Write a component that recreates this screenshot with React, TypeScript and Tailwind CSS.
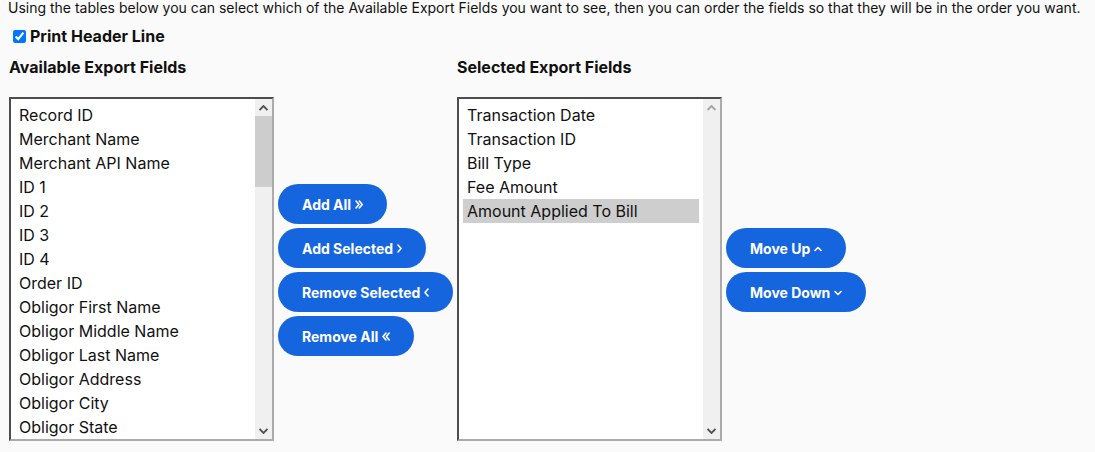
import React from "react";

const left = [
  "Record ID",
  "Merchant Name",
  "Merchant API Name",
  "ID 1",
  "ID 2",
  "ID 3",
  "ID 4",
  "Order ID",
  "Obligor First Name",
  "Obligor Middle Name",
  "Obligor Last Name",
  "Obligor Address",
  "Obligor City",
  "Obligor State",
];

const right = ["Transaction Date", "Transaction ID", "Bill Type", "Fee Amount", "Amount Applied To Bill"];

function Arrow({ up, color }: { up?: boolean; color: string }) {
  return (
    <svg width="9" height="6" viewBox="0 0 9 6">
      {up ? (
        <path d="M0.5 5 L4.5 1 L8.5 5" fill="none" stroke={color} strokeWidth="1.8" />
      ) : (
        <path d="M0.5 1 L4.5 5 L8.5 1" fill="none" stroke={color} strokeWidth="1.8" />
      )}
    </svg>
  );
}

type IconKind = "rr" | "r" | "l" | "ll" | "u" | "d";

function Icon({ kind }: { kind: IconKind }) {
  const common = { fill: "none", stroke: "white", strokeWidth: 1.6, strokeLinecap: "round" as const, strokeLinejoin: "round" as const };
  if (kind === "r")
    return (
      <svg width="5" height="9" viewBox="0 0 5 9">
        <path d="M1 1 L4 4.5 L1 8" {...common} />
      </svg>
    );
  if (kind === "l")
    return (
      <svg width="5" height="9" viewBox="0 0 5 9">
        <path d="M4 1 L1 4.5 L4 8" {...common} />
      </svg>
    );
  if (kind === "rr")
    return (
      <svg width="8" height="9" viewBox="0 0 8 9">
        <path d="M1 1 L4 4.5 L1 8 M4.3 1 L7.2 4.5 L4.3 8" {...common} />
      </svg>
    );
  if (kind === "ll")
    return (
      <svg width="8" height="9" viewBox="0 0 8 9">
        <path d="M4 1 L1 4.5 L4 8 M7.2 1 L4.3 4.5 L7.2 8" {...common} />
      </svg>
    );
  if (kind === "u")
    return (
      <svg width="8" height="6" viewBox="0 0 8 6" className="mt-[2px]">
        <path d="M1 4.5 L4 1.5 L7 4.5" {...common} />
      </svg>
    );
  return (
    <svg width="8" height="6" viewBox="0 0 8 6" className="mt-[1px]">
      <path d="M1 1.5 L4 4.5 L7 1.5" {...common} />
    </svg>
  );
}

function ListBox({ items, selected, thumb }: { items: string[]; selected?: number; thumb?: boolean }) {
  return (
    <div className="flex h-[344px] w-[265px] shrink-0 border-t-2 border-l-2 border-r-2 border-b-2 border-t-[#4d4d4d] border-l-[#4d4d4d] border-r-[#ababab] border-b-[#ababab] bg-white">
      <div className="flex-1 overflow-hidden px-1 pt-1">
        {items.map((t, i) => (
          <div
            key={t}
            className={`h-6 px-1 text-[16px] leading-6 whitespace-nowrap text-[#111] ${i === selected ? "bg-[#cecece]" : ""}`}
          >
            {t}
          </div>
        ))}
      </div>
      <div className="flex w-[17px] shrink-0 flex-col bg-[#f0f0f0]">
        <div className="flex h-[17px] items-center justify-center">
          <Arrow up color={thumb ? "#505050" : "#a3a3a3"} />
        </div>
        <div className="flex-1">
          {thumb && <div className="h-[71px] bg-[#cdcdcd]" />}
        </div>
        <div className="flex h-[17px] items-center justify-center">
          <Arrow color="#505050" />
        </div>
      </div>
    </div>
  );
}

function Btn({ label, icon }: { label: string; icon: IconKind }) {
  return (
    <button className="flex h-10 shrink-0 items-center gap-1 self-start rounded-full bg-[#1565df] px-6 text-[14px] font-bold whitespace-nowrap text-white">
      <span>{label}</span>
      <Icon kind={icon} />
    </button>
  );
}

export default function App() {
  return (
    <div className="h-[452px] w-[1095px] overflow-hidden bg-[#fafafa] font-['Inter',sans-serif] text-[#111]">
      <p className="pl-2 text-[14px] leading-4 whitespace-nowrap">
        Using the tables below you can select which of the Available Export Fields you want to see, then you can order the fields so that they will be in the order you want.
      </p>
      <label className="mt-[10px] ml-[13px] flex h-5 items-center gap-[4px]">
        <input type="checkbox" defaultChecked className="h-[13px] w-[13px]" />
        <span className="text-[16px] font-bold leading-5">Print Header Line</span>
      </label>
      <div className="mt-[11px] flex pl-[9px]">
        <div className="w-[448px] shrink-0">
          <div className="text-[16px] font-bold leading-5">Available Export Fields</div>
          <div className="mt-5 flex items-center gap-1">
            <ListBox items={left} thumb />
            <div className="flex shrink-0 flex-col gap-1 pt-[2px]">
              <Btn label="Add All" icon="rr" />
              <Btn label="Add Selected" icon="r" />
              <Btn label="Remove Selected" icon="l" />
              <Btn label="Remove All" icon="ll" />
            </div>
          </div>
        </div>
        <div>
          <div className="text-[16px] font-bold leading-5">Selected Export Fields</div>
          <div className="mt-5 flex items-center gap-1">
            <ListBox items={right} selected={4} />
            <div className="flex shrink-0 flex-col gap-1 pt-[2px]">
              <Btn label="Move Up" icon="u" />
              <Btn label="Move Down" icon="d" />
            </div>
          </div>
        </div>
      </div>
    </div>
  );
}
